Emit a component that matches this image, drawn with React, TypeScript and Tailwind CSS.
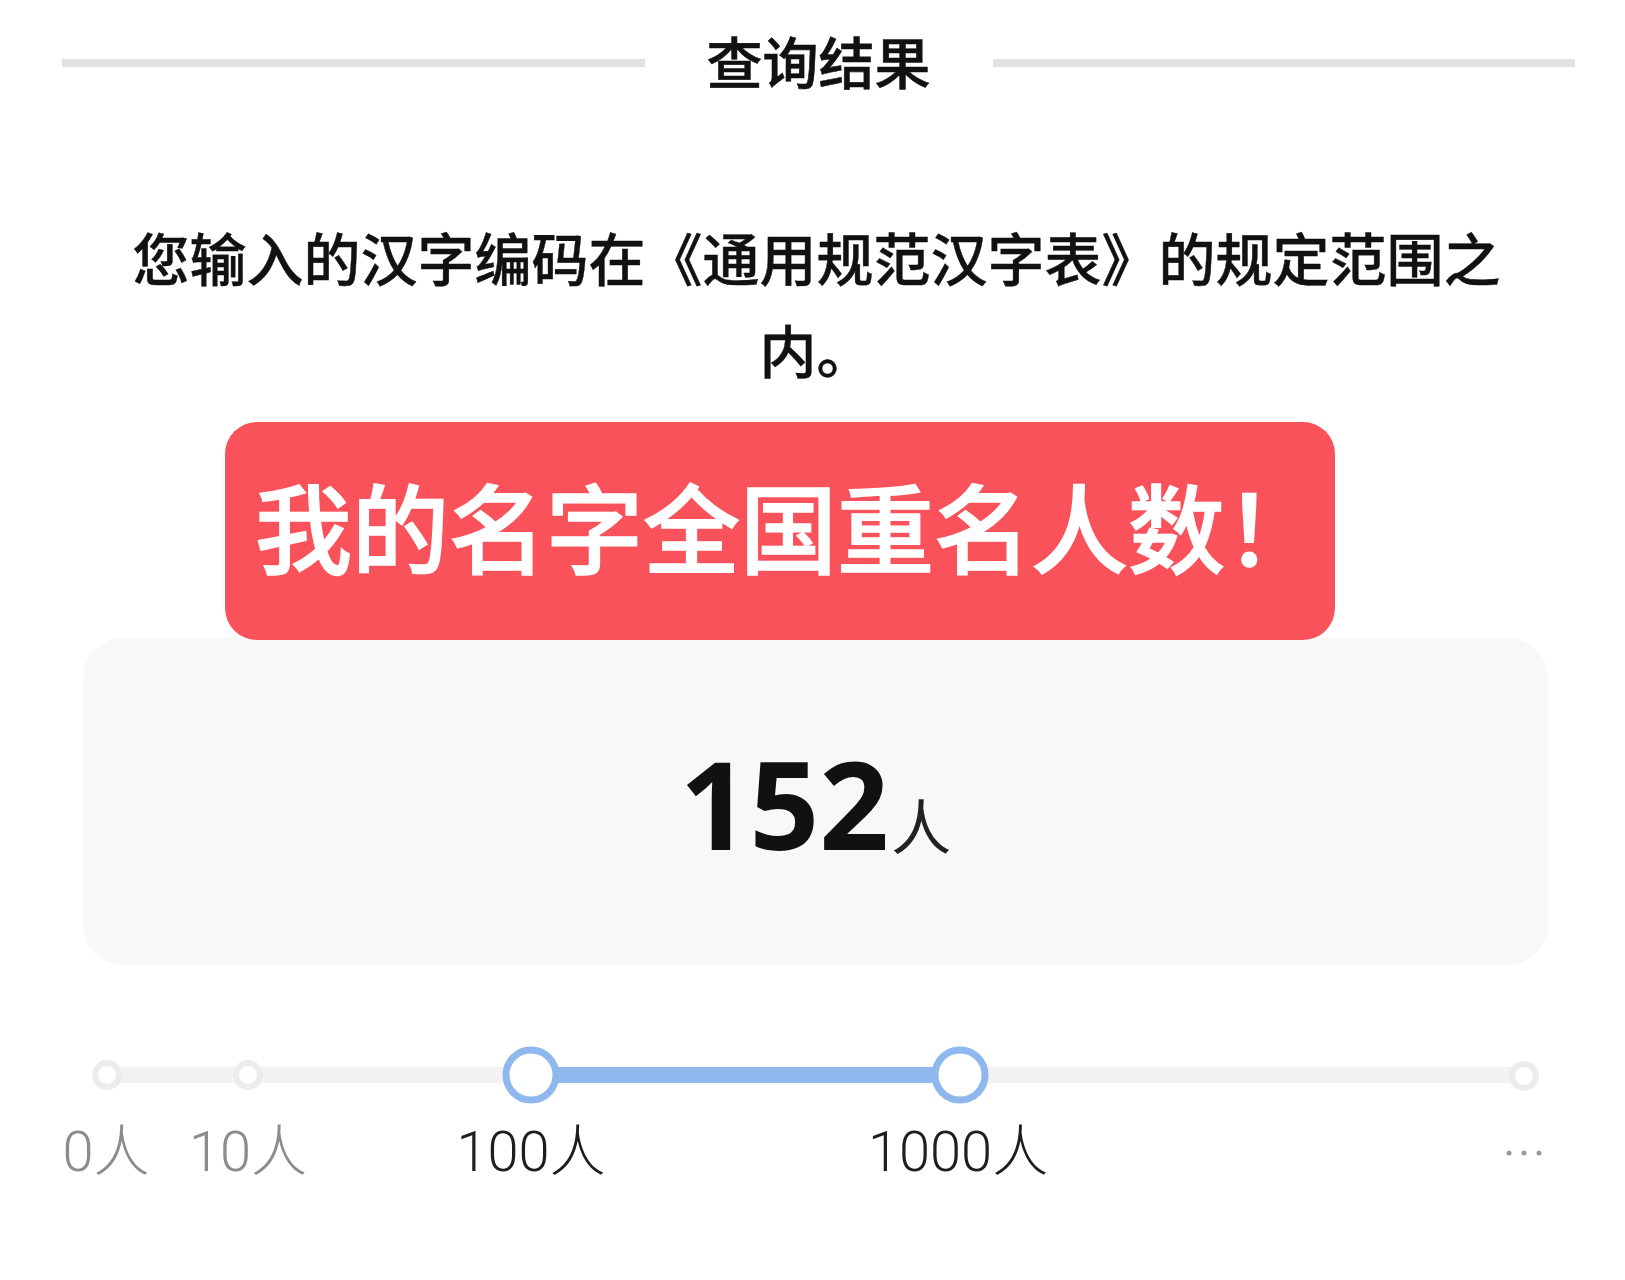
import React from "react";

const cjk = "font-['Noto_Sans_CJK_SC','Noto_Sans',sans-serif]";

export default function App() {
  return (
    <div className={`w-[1625px] h-[1280px] bg-white text-[#111] ${cjk}`}>
      {/* header */}
      <div className="flex h-[120px] items-center pl-[62px] pr-[50px]">
        <div className="mt-[6px] h-[8px] flex-1 bg-[#e2e2e2]" />
        <div className="mx-[62px] text-[56px] leading-[56px] font-medium [-webkit-text-stroke:0.6px_#111]">查询结果</div>
        <div className="mt-[6px] h-[8px] flex-1 bg-[#e2e2e2]" />
      </div>

      {/* paragraph */}
      <div className="mx-auto mt-[90px] w-[1400px] translate-x-[4px] text-center text-[57px] leading-[92px] font-medium [-webkit-text-stroke:0.4px_#111]">
        您输入的汉字编码在《通用规范汉字表》的规定范围之内。
      </div>

      {/* banner */}
      <div className="relative z-10 ml-[225px] mt-[28px] flex h-[218px] w-[1110px] items-center rounded-[32px] bg-[#fa525a] pb-[16px] pl-[30px]">
        <span className="text-[97px] leading-none font-medium text-white [-webkit-text-stroke:1.5px_white]">我的名字全国重名人数！</span>
      </div>

      {/* count card */}
      <div className="ml-[83px] -mt-[2px] flex h-[327px] w-[1465px] items-center justify-center rounded-[40px] bg-[#f8f8f8]">
        <div className="flex items-baseline pt-[2px]">
          <span className="font-['Open_Sans','Noto_Sans',sans-serif] text-[122px] font-bold leading-none text-[#111]">152</span>
          <span className="ml-[2px] text-[60px] leading-none text-[#222]">人</span>
        </div>
      </div>

      {/* slider */}
      <div className="relative h-[230px] w-full">
        <div className="absolute left-[107px] top-[102px] h-[16px] w-[1418px] rounded-full bg-[#f2f2f2]" />
        <div className="absolute left-[531px] top-[102px] h-[16px] w-[429px] bg-[#8fb8ef]" />

        <div className="absolute left-[107px] top-[110px] h-[30px] w-[30px] -translate-x-1/2 -translate-y-1/2 rounded-full border-[6px] border-[#ececec] bg-white" />
        <div className="absolute left-[248px] top-[110px] h-[30px] w-[30px] -translate-x-1/2 -translate-y-1/2 rounded-full border-[6px] border-[#ececec] bg-white" />
        <div className="absolute left-[1524px] top-[111px] h-[30px] w-[30px] -translate-x-1/2 -translate-y-1/2 rounded-full border-[6px] border-[#ececec] bg-white" />

        <div className="absolute left-[531px] top-[110px] h-[57px] w-[57px] -translate-x-1/2 -translate-y-1/2 rounded-full border-[7px] border-[#8fb8ef] bg-white" />
        <div className="absolute left-[960px] top-[110px] h-[57px] w-[57px] -translate-x-1/2 -translate-y-1/2 rounded-full border-[7px] border-[#8fb8ef] bg-white" />

        <div className="absolute left-[106px] top-[187px] -translate-x-1/2 -translate-y-1/2 whitespace-nowrap font-['Roboto','Noto_Sans_CJK_SC',sans-serif] text-[56px] font-light leading-none text-[#8c8c8c]">0人</div>
        <div className="absolute left-[248px] top-[187px] -translate-x-1/2 -translate-y-1/2 whitespace-nowrap font-['Roboto','Noto_Sans_CJK_SC',sans-serif] text-[56px] font-light leading-none text-[#8c8c8c]">10人</div>
        <div className="absolute left-[531px] top-[187px] -translate-x-1/2 -translate-y-1/2 whitespace-nowrap font-['Roboto','Noto_Sans_CJK_SC',sans-serif] text-[56px] font-light leading-none text-[#1e1e1e]">100人</div>
        <div className="absolute left-[958px] top-[187px] -translate-x-1/2 -translate-y-1/2 whitespace-nowrap font-['Roboto','Noto_Sans_CJK_SC',sans-serif] text-[56px] font-light leading-none text-[#1e1e1e]">1000人</div>

        <div className="absolute left-[1524px] top-[188px] flex -translate-x-1/2 -translate-y-1/2 gap-[10px]">
          <div className="h-[5px] w-[5px] rounded-full bg-[#9a9a9a]" />
          <div className="h-[5px] w-[5px] rounded-full bg-[#9a9a9a]" />
          <div className="h-[5px] w-[5px] rounded-full bg-[#9a9a9a]" />
        </div>
      </div>
    </div>
  );
}
